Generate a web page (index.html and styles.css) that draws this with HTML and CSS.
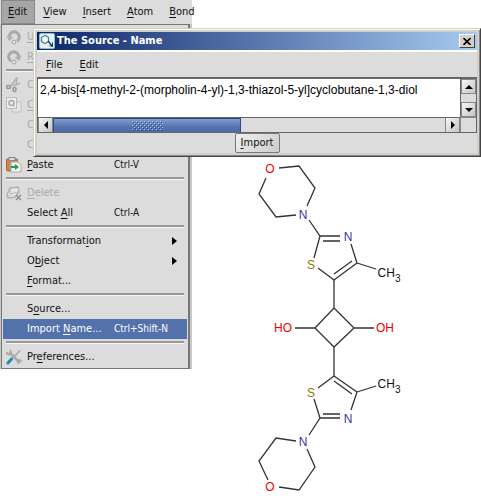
FILE: index.html
```html
<!DOCTYPE html>
<html lang="en">
<head>
<meta charset="utf-8">
<title>The Source - Name</title>
<link rel="stylesheet" href="styles.css">
</head>
<body>
<main class="desktop">
  <section class="app">
    <nav class="menubar" aria-label="Main menu">
      <button class="top active"><u>E</u>dit</button>
      <button class="top"><u>V</u>iew</button>
      <button class="top"><u>I</u>nsert</button>
      <button class="top"><u>A</u>tom</button>
      <button class="top"><u>B</u>ond</button>
    </nav>
    <div class="menu" role="menu">
      <button class="item off" role="menuitem"><svg class="icon" viewBox="0 0 16 16"><path d="M4 10.500A5 5 0 1 1 11 12" fill="none" stroke="#777" stroke-width="3"/><path d="M0.500 6.500L7.500 8L3 12Z" fill="#888"/><circle cx="8" cy="13" r="2" fill="#eee" stroke="#666"/></svg><span><u>U</u>ndo</span></button>
      <button class="item off" role="menuitem"><svg class="icon" viewBox="0 0 16 16"><path d="M5 12A5 5 0 1 1 12 10.500" fill="none" stroke="#777" stroke-width="3"/><path d="M15.500 6.500L8.500 8L13 12Z" fill="#888"/><circle cx="8" cy="13" r="2" fill="#eee" stroke="#666"/></svg><span><u>R</u>edo</span></button>
      <hr>
      <button class="item off" role="menuitem"><svg class="icon" viewBox="0 0 16 16"><path d="M5 9L11 0.500L10 8M7 9L14 6" fill="none" stroke="#888" stroke-width="1.500"/><ellipse cx="2.500" cy="10" rx="2" ry="1.500" fill="none" stroke="#555" stroke-width="1.500"/><ellipse cx="8.500" cy="12.500" rx="1.500" ry="2" fill="none" stroke="#555" stroke-width="1.500"/></svg><span>C<u>u</u>t</span></button>
      <button class="item off" role="menuitem"><svg class="icon" viewBox="0 0 16 16"><rect x="6" y="5" width="9" height="10" fill="#eee" stroke="#aaa"/><rect x="0.500" y="0.500" width="10" height="11" fill="#fff" stroke="#999"/><circle cx="5.500" cy="6" r="2.500" fill="#fff" stroke="#777" stroke-width="1.500"/><path d="M7 8L9 10" stroke="#777"/></svg><span><u>C</u>opy</span></button>
      <button class="item off" role="menuitem"><span class="icon"></span><span>Copy As</span></button>
      <button class="item off" role="menuitem"><span class="icon"></span><span>Copy As...</span></button>
      <button class="item" role="menuitem"><svg class="icon" viewBox="0 0 16 16"><rect x="0.500" y="2" width="11" height="12" rx="1" fill="#c8874d" stroke="#ad6835"/><rect x="3" y="0.500" width="6" height="3" fill="#ddd" stroke="#888"/><path d="M5 5H12L15 8V15H5Z" fill="#f5f5f5" stroke="#aaa"/><path d="M5 9H9V7L13 10L9 13V11H5Z" fill="#16a34a"/></svg><span><u>P</u>aste</span><kbd>Ctrl-V</kbd></button>
      <hr>
      <button class="item off" role="menuitem"><svg class="icon" viewBox="0 0 16 16"><path d="M1 10L4 3L12 2L13 7L9 12L2 13Z" fill="#eee" stroke="#888" stroke-width="1.500"/><path d="M4 4L5 9L2 12M5 9L12 7" fill="none" stroke="#999"/><path d="M10 10L15 15M15 10L10 15" stroke="#444" stroke-width="1.500"/></svg><span><u>D</u>elete</span></button>
      <button class="item" role="menuitem"><span class="icon"></span><span>Select <u>A</u>ll</span><kbd>Ctrl-A</kbd></button>
      <hr>
      <button class="item" role="menuitem"><span class="icon"></span><span>Transformat<u>i</u>on</span><i class="arrow"></i></button>
      <button class="item" role="menuitem"><span class="icon"></span><span>O<u>b</u>ject</span><i class="arrow"></i></button>
      <button class="item" role="menuitem"><span class="icon"></span><span><u>F</u>ormat...</span></button>
      <hr>
      <button class="item" role="menuitem"><span class="icon"></span><span>S<u>o</u>urce...</span></button>
      <button class="item chosen" role="menuitem"><span class="icon"></span><span>Import <u>N</u>ame...</span><kbd>Ctrl+Shift-N</kbd></button>
      <hr>
      <button class="item" role="menuitem"><svg class="icon" viewBox="0 0 16 16"><path d="M4 4L13 13" stroke="#aaa" stroke-width="2.500" stroke-linecap="round"/><path d="M0.500 3Q1 6 4 5.500Q6 4 4 1" fill="none" stroke="#aaa" stroke-width="1.800"/><path d="M12.500 15Q11 12 13 11Q15 11 15.500 13" fill="none" stroke="#aaa" stroke-width="1.800"/><path d="M7 9L14 1.500" stroke="#aaa" stroke-width="1.800"/><path d="M2 14L5.500 10" stroke="#1d8db5" stroke-width="3" stroke-linecap="round"/></svg><span>Pr<u>e</u>ferences...</span></button>
    </div>
  </section>

  <section class="canvas">
    <svg class="molecule" width="160" height="338" viewBox="250 160 160 338" role="img" aria-label="Structure drawing">
      <g class="bonds">
        <path d="M279 168L299 166L315 188L307 206M296 215L276 217L259 194L266 178M309 220L320 236H340M323 241H340M320 236L314 258M318 268L334 280L357 263L351 244M334 274L352 261M357 263L376 269"/>
        <path d="M334 280V308L315 328L334 347L354 328L334 308M295 328H315M354 328H374M334 347V376"/>
        <path d="M334 376L318 388M314 399L320 418H340M323 414H340M351 410L357 392L334 376M352 394L334 381M357 392L376 386M320 418L309 435M296 441L276 438L259 461L268 480M279 487L299 490L315 467L307 449"/>
      </g>
      <g class="atoms">
        <text class="o" x="270" y="173">O</text>
        <text class="n" x="303" y="219">N</text>
        <text class="n" x="348" y="241">N</text>
        <text class="s" x="311" y="269">S</text>
        <text x="389" y="277">CH<tspan class="sub" dy="5">3</tspan></text>
        <text class="o" x="283" y="332">HO</text>
        <text class="o" x="385" y="332">OH</text>
        <text class="s" x="311" y="397">S</text>
        <text x="389" y="388">CH<tspan class="sub" dy="5">3</tspan></text>
        <text class="n" x="348" y="423">N</text>
        <text class="n" x="303" y="446">N</text>
        <text class="o" x="270" y="491">O</text>
      </g>
    </svg>
  </section>

  <section class="dialog" role="dialog" aria-labelledby="dialog-title">
    <header class="titlebar">
      <svg class="logo" viewBox="0 0 16 16"><rect width="16" height="16" rx="2" fill="#8fbccb"/><rect x="1" y="1" width="14" height="14" rx="1" fill="#e4f1f5"/><path d="M2.500 4.500L6 2.500L9.500 4.500V8.500L6 10.500L2.500 8.500Z" fill="#fff" stroke="#4d8499" stroke-width="1.300"/><path d="M9 8L13.500 13.500" stroke="#173e5a" stroke-width="1.300"/><path d="M10.500 12.500L13.500 13.500V9.500" fill="none" stroke="#173e5a"/></svg>
      <h1 id="dialog-title">The Source - Name</h1>
      <button class="close" aria-label="Close"><svg viewBox="0 0 8 7"><path d="M0.500 0L7.500 7M7.500 0L0.500 7" stroke="#000" stroke-width="1.600"/></svg></button>
    </header>
    <nav class="dialog-menu" aria-label="Dialog menu">
      <button><u>F</u>ile</button>
      <button><u>E</u>dit</button>
    </nav>
    <div class="editor">
      <textarea class="source" aria-label="Name" wrap="off" spellcheck="false">2,4-bis[4-methyl-2-(morpholin-4-yl)-1,3-thiazol-5-yl]cyclobutane-1,3-diol</textarea>
      <div class="vscroll">
        <button class="step" aria-label="Scroll up"><i class="up"></i></button>
        <button class="step" aria-label="Scroll down"><i class="down"></i></button>
      </div>
      <div class="hscroll">
        <button class="step" aria-label="Scroll left"><i class="left"></i></button>
        <div class="track"><div class="thumb"><svg width="31" height="10"><defs><pattern id="grip" width="4" height="4" patternUnits="userSpaceOnUse"><path d="M0 0h1v1h-1zM2 2h1v1h-1z" fill="#b5c8ea"/><path d="M1 1h1v1h-1zM3 3h1v1h-1z" fill="#294a86"/></pattern></defs><rect width="31" height="10" fill="url(#grip)"/></svg></div></div>
        <button class="step" aria-label="Scroll right"><i class="right"></i></button>
      </div>
      <div class="corner"></div>
    </div>
    <footer class="actions"><button class="import"><u>I</u>mport</button></footer>
  </section>
</main>
</body>
</html>
```
FILE: styles.css
```css
* { box-sizing: border-box; }

body {
  margin: 0;
  background: #fff;
  color: #111;
  font: 11px/16px "DejaVu Sans Condensed", "DejaVu Sans", sans-serif;
}

button {
  margin: 0;
  padding: 0;
  border: 0;
  background: none;
  color: inherit;
  font: inherit;
}

u { text-underline-offset: 2px; }

.desktop {
  position: relative;
  display: grid;
  grid-template-columns: 192px 1fr;
  align-items: start;
}

.app {
  min-width: 0;
  background: #c8c8c8;
}

.menubar {
  display: flex;
  height: 24px;
  background: #dcdcdc;
}

.top {
  flex: none;
  padding: 0 8px;
}

.top.active {
  margin-left: 1px;
  background: #a6a6a6;
  border: 1px solid #888;
  padding: 0 7px 0 6px;
}

.menu {
  margin: 0 2px 0 1px;
  padding: 2px 1px 1px;
  border: 1px solid #777;
  border-right-width: 2px;
  background: #dcdcdc;
}

.item {
  display: grid;
  grid-template-columns: 16px 82px 1fr;
  align-items: center;
  width: 100%;
  height: 20px;
  padding: 0 4px 0 3px;
  column-gap: 5px;
  text-align: left;
  white-space: nowrap;
}

.item kbd { font: 10px/16px "DejaVu Sans Condensed", sans-serif; }
.item .icon { width: 16px; height: 16px; }
.item.off { color: #aaa; }
.item.off .icon { opacity: 0.5; }
.item.chosen { background: #5371aa; color: #fff; }

.menu hr {
  height: 3px;
  margin: 2px 3px 3px;
  border: 0;
  border-top: 2px solid #999;
  border-bottom: 1px solid #f5f5f5;
}

.arrow {
  justify-self: end;
  margin-right: 6px;
  border: 4px solid transparent;
  border-left: 5px solid #000;
  border-right: 0;
}

.canvas { padding: 160px 0 0 58px; }
.molecule { display: block; }
.bonds { fill: none; stroke: #333; stroke-width: 1.3; }

.atoms {
  font: 12px "Liberation Sans", sans-serif;
  text-anchor: middle;
  fill: #111;
}

.atoms .sub { font-size: 10px; }
.atoms .o { fill: #f00000; }
.atoms .n { fill: #3636a0; }
.atoms .s { fill: #808000; }

.dialog {
  position: absolute;
  top: 28px;
  left: 33px;
  right: 0;
  padding: 3px;
  background: #dcdcdc;
  border: 1px solid;
  border-color: #d4d0c8 #444 #444 #d4d0c8;
  box-shadow: inset 1px 1px #fff, inset -1px -1px #888, inset 0 0 0 3px #d4d0c8;
}

.titlebar {
  display: flex;
  align-items: center;
  height: 18px;
  padding: 0 2px;
  gap: 2px;
  background: linear-gradient(90deg, #0a246a, #a6caf0);
  color: #fff;
}

.logo { width: 16px; height: 16px; }

.titlebar h1 {
  flex: 1;
  margin: 0;
  font: bold 11px/16px "DejaVu Sans Condensed", sans-serif;
}

.close {
  display: grid;
  place-items: center;
  width: 16px;
  height: 14px;
  background: #d4d0c8;
  border: 1px solid;
  border-color: #fff #444 #444 #fff;
}

.close svg { width: 8px; height: 7px; }

.dialog-menu {
  display: flex;
  height: 27px;
  padding-left: 9px;
  gap: 17px;
  border-top: 2px solid #fff;
}

.editor {
  display: grid;
  grid-template: 38px 15px / 1fr 16px;
  border: 1px solid #666;
  border-top-width: 2px;
}

.source {
  display: block;
  width: 100%;
  height: 100%;
  padding: 2px;
  border: 0;
  outline: 0;
  resize: none;
  overflow: hidden;
  background: #fff;
  color: #000;
  font: 12px/18px "Liberation Sans", sans-serif;
}

.vscroll {
  display: flex;
  flex-direction: column;
  justify-content: space-between;
  border-left: 1px solid #666;
}

.step {
  display: grid;
  place-items: center;
  width: 15px;
  height: 15px;
  background: linear-gradient(135deg, #f6f6f6, #c4c4c4);
  border: 1px solid #888;
}

.hscroll {
  display: flex;
  border-top: 1px solid #666;
}

.hscroll .step { height: 14px; border-top: 0; border-bottom: 0; }
.track { flex: 1; }

.thumb {
  display: grid;
  place-items: center;
  width: 48%;
  height: 14px;
  background: linear-gradient(#829cce, #5575b0 60%, #4e6ca5);
  border: 1px solid #294a86;
  border-bottom: 0;
}

.corner { border: 1px solid #888; border-width: 1px 0 0 1px; }

.up, .down, .left, .right { border: 4px solid transparent; }
.up { border-bottom-color: #000; border-top: 0; }
.down { border-top-color: #000; border-bottom: 0; }
.left { border-right-color: #000; border-left: 0; }
.right { border-left-color: #000; border-right: 0; }

.actions {
  display: flex;
  justify-content: center;
  height: 20px;
}

.import {
  width: 45px;
  height: 20px;
  background: linear-gradient(135deg, #f0f0f0, #cccccc);
  border: 1px solid #777;
  border-radius: 2px;
}
```
